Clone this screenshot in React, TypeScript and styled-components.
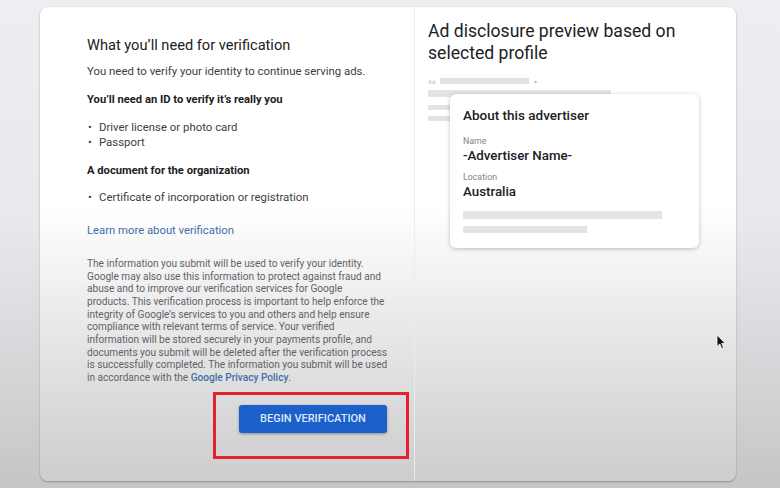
import styled, { createGlobalStyle } from "styled-components"

const GlobalStyle = createGlobalStyle`
  html, body {
    margin: 0;
    padding: 0;
  }
  body {
    width: 780px;
    height: 488px;
    overflow: hidden;
    font-family: Roboto, "Liberation Sans", Arial, sans-serif;
  }
`

const Page = styled.div`
  position: relative;
  width: 780px;
  height: 488px;
  box-sizing: border-box;
  padding: 7px 0 0 40px;
  background: linear-gradient(180deg, #eceef1 0%, #e7e9ec 45%, #cfd0d2 85%, #c4c5c7 100%);
`

const Card = styled.div`
  width: 696px;
  height: 474px;
  display: grid;
  grid-template-columns: 374px 1fr;
  border-radius: 8px;
  background: linear-gradient(180deg, #ffffff 0%, #ffffff 42%, #e6e6e6 70%, #cdcdcd 100%);
  box-shadow: 0 1px 2px rgba(0, 0, 0, 0.28), 0 0 1px rgba(0, 0, 0, 0.15);
  overflow: hidden;
`

const LeftColumn = styled.div`
  display: flex;
  flex-direction: column;
  padding: 29px 27px 0 47px;
`

const Title = styled.h2`
  margin: 0;
  font-size: 14.6px;
  line-height: 18px;
  font-weight: 400;
  color: #202124;
`

const Body = styled.p<{ $top: number }>`
  margin: ${p => p.$top}px 0 0;
  font-size: 11.4px;
  line-height: 15px;
  color: #3c4043;
`

const SubHeading = styled.h3`
  margin: 13px 0 0;
  font-size: 11.2px;
  line-height: 15px;
  font-weight: 700;
  color: #202124;
`

const List = styled.ul<{ $top: number }>`
  margin: ${p => p.$top}px 0 0;
  padding: 0;
  list-style: none;
`

const Item = styled.li`
  position: relative;
  padding-left: 12px;
  font-size: 11.4px;
  line-height: 15px;
  color: #3c4043;
  &::before {
    content: "•";
    position: absolute;
    left: 1px;
    top: 0;
  }
`

const LearnLink = styled.a`
  margin-top: 18px;
  font-size: 11.3px;
  line-height: 15px;
  color: #3e6fa8;
  text-decoration: none;
`

const FinePrint = styled.p`
  margin: 20px 0 0;
  font-size: 10.1px;
  line-height: 12.67px;
  color: #5f6368;
  white-space: nowrap;
`

const InlineLink = styled.a`
  color: #3e6fa8;
  text-decoration: none;
  font-weight: 500;
`

const ButtonRow = styled.div`
  position: relative;
  display: flex;
  justify-content: flex-end;
  margin-top: 20px;
`

const PrimaryButton = styled.button`
  width: 148px;
  height: 28px;
  border: none;
  border-radius: 3px;
  background: #1b5fca;
  color: #dde7f7;
  font-family: Roboto, "Liberation Sans", Arial, sans-serif;
  font-size: 11px;
  font-weight: 500;
  box-shadow: 0 1px 3px rgba(0, 0, 0, 0.35);
`

const Highlight = styled.div`
  position: absolute;
  left: 126px;
  top: -13px;
  width: 196px;
  height: 67px;
  box-sizing: border-box;
  border: 3px solid #e3222b;
  pointer-events: none;
`

const RightColumn = styled.div`
  display: flex;
  flex-direction: column;
  padding: 13px 0 0 13px;
  border-left: 1px solid #ececec;
`

const PreviewTitle = styled.h2`
  margin: 0;
  font-size: 17.6px;
  line-height: 22px;
  font-weight: 400;
  color: #202124;
`

const Preview = styled.div`
  position: relative;
  margin-top: 13px;
`

const AdRow = styled.div`
  display: flex;
  align-items: center;
  gap: 5px;
  height: 8px;
`

const AdLabel = styled.span`
  font-size: 6px;
  color: #b8b8b8;
`

const Bar = styled.div<{ $w: number; $h: number; $top?: number }>`
  width: ${p => p.$w}px;
  height: ${p => p.$h}px;
  margin-top: ${p => p.$top ?? 0}px;
  background: #e3e3e3;
  flex-shrink: 0;
`

const Caret = styled.span`
  font-size: 6px;
  color: #b8b8b8;
`

const Popup = styled.div`
  position: absolute;
  left: 22px;
  top: 17px;
  width: 249px;
  height: 154px;
  box-sizing: border-box;
  padding: 13px 13px 0;
  background: #ffffff;
  border-radius: 6px;
  box-shadow: 0 1px 4px rgba(0, 0, 0, 0.25);
  display: flex;
  flex-direction: column;
`

const PopupTitle = styled.div`
  font-size: 13.5px;
  line-height: 16px;
  font-weight: 500;
  color: #202124;
`

const FieldLabel = styled.div<{ $top: number }>`
  margin-top: ${p => p.$top}px;
  font-size: 8.8px;
  line-height: 11px;
  color: #80868b;
`

const FieldValue = styled.div`
  margin-top: 1px;
  font-size: 13.3px;
  line-height: 16px;
  font-weight: 500;
  color: #202124;
`

const Cursor = styled.svg`
  position: absolute;
  left: 716px;
  top: 334px;
`

const finePrintLines = [
  "The information you submit will be used to verify your identity.",
  "Google may also use this information to protect against fraud and",
  "abuse and to improve our verification services for Google",
  "products. This verification process is important to help enforce the",
  "integrity of Google’s services to you and others and help ensure",
  "compliance with relevant terms of service. Your verified",
  "information will be stored securely in your payments profile, and",
  "documents you submit will be deleted after the verification process",
  "is successfully completed. The information you submit will be used",
]

export default function App() {
  return (
    <>
      <GlobalStyle />
      <Page>
        <Card>
          <LeftColumn>
            <Title>What you’ll need for verification</Title>
            <Body $top={10}>You need to verify your identity to continue serving ads.</Body>
            <SubHeading>You’ll need an ID to verify it’s really you</SubHeading>
            <List $top={13}>
              <Item>Driver license or photo card</Item>
              <Item>Passport</Item>
            </List>
            <SubHeading>A document for the organization</SubHeading>
            <List $top={12}>
              <Item>Certificate of incorporation or registration</Item>
            </List>
            <LearnLink href="#">Learn more about verification</LearnLink>
            <FinePrint>
              {finePrintLines.map(line => (
                <span key={line}>
                  {line}
                  <br />
                </span>
              ))}
              in accordance with the <InlineLink href="#">Google Privacy Policy</InlineLink>.
            </FinePrint>
            <ButtonRow>
              <PrimaryButton>BEGIN VERIFICATION</PrimaryButton>
              <Highlight />
            </ButtonRow>
          </LeftColumn>
          <RightColumn>
            <PreviewTitle>
              Ad disclosure preview based on
              <br />
              selected profile
            </PreviewTitle>
            <Preview>
              <AdRow>
                <AdLabel>Ad</AdLabel>
                <Bar $w={89} $h={6} />
                <Caret>▾</Caret>
              </AdRow>
              <Bar $w={183} $h={7} $top={5} />
              <Bar $w={60} $h={5} $top={8} />
              <Bar $w={60} $h={5} $top={6} />
              <Popup>
                <PopupTitle>About this advertiser</PopupTitle>
                <FieldLabel $top={13}>Name</FieldLabel>
                <FieldValue>-Advertiser Name-</FieldValue>
                <FieldLabel $top={8}>Location</FieldLabel>
                <FieldValue>Australia</FieldValue>
                <Bar $w={199} $h={8} $top={11} />
                <Bar $w={124} $h={7} $top={7} />
              </Popup>
            </Preview>
          </RightColumn>
        </Card>
        <Cursor width="10" height="16" viewBox="0 0 10 16">
          <path d="M1 1 L1 12.5 L3.8 10 L5.8 14.6 L7.6 13.8 L5.6 9.3 L9.2 9.3 Z" fill="#111" stroke="#fff" strokeWidth="0.8" />
        </Cursor>
      </Page>
    </>
  )
}
